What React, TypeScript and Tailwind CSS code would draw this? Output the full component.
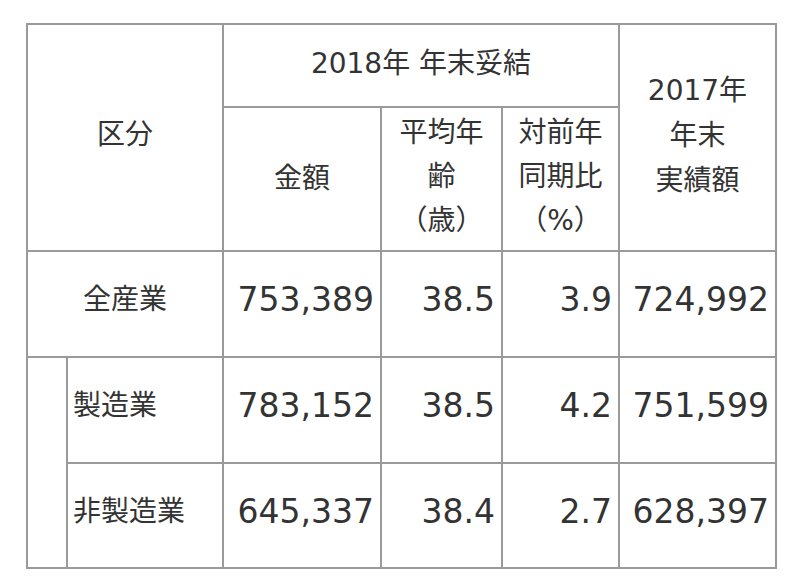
const font = { fontFamily: '"DejaVu Sans", "Noto Sans CJK JP", sans-serif' };

type Row = {
  label: string;
  amount: string;
  age: string;
  yoy: string;
  prev: string;
};

const ROWS: Row[] = [
  { label: '全産業', amount: '753,389', age: '38.5', yoy: '3.9', prev: '724,992' },
  { label: '製造業', amount: '783,152', age: '38.5', yoy: '4.2', prev: '751,599' },
  { label: '非製造業', amount: '645,337', age: '38.4', yoy: '2.7', prev: '628,397' },
];

const cell = 'border-r-2 border-b-2 border-[#9a9a9a] flex';
const num = `${cell} items-center justify-end pr-[6px] pb-[8px] text-[33px]`;

export default function App() {
  return (
    <div className="w-[800px] h-[586px] bg-white text-[#333] pt-[23px] pl-[26px]" style={font}>
      <div className="grid w-[751px] grid-cols-[40px_156px_158px_121px_117px_157px] grid-rows-[83px_144px_106px_106px_105px] border-l-2 border-t-2 border-[#9a9a9a]">
        {/* header */}
        <div className={`${cell} col-span-2 row-span-2 items-center justify-center pb-[6px] text-[28px]`}>
          区分
        </div>
        <div className={`${cell} col-span-3 items-center justify-center pb-[4px] text-[28px]`}>
          2018年 年末妥結
        </div>
        <div className={`${cell} row-span-2 flex-col items-center justify-center pb-[4px] text-[28px] leading-[45px]`}>
          <span>2017年</span>
          <span>年末</span>
          <span>実績額</span>
        </div>
        <div className={`${cell} items-center justify-center text-[28px]`}>金額</div>
        <div className={`${cell} flex-col items-center justify-center pb-[4px] text-[28px] leading-[44px]`}>
          <span>平均年</span>
          <span>齢</span>
          <span>（歳）</span>
        </div>
        <div className={`${cell} flex-col items-center justify-center pb-[4px] text-[28px] leading-[44px]`}>
          <span>対前年</span>
          <span>同期比</span>
          <span>（%）</span>
        </div>

        {/* 全産業 */}
        <div className={`${cell} col-span-2 items-center justify-center pb-[8px] text-[28px]`}>
          {ROWS[0].label}
        </div>
        <div className={num}>{ROWS[0].amount}</div>
        <div className={num}>{ROWS[0].age}</div>
        <div className={num}>{ROWS[0].yoy}</div>
        <div className={num}>{ROWS[0].prev}</div>

        {/* 内訳 */}
        <div className={`${cell} row-span-2`} />
        {ROWS.slice(1).map((r) => (
          <div key={r.label} className="contents">
            <div className={`${cell} items-center pl-[5px] pb-[8px] text-[28px]`}>{r.label}</div>
            <div className={num}>{r.amount}</div>
            <div className={num}>{r.age}</div>
            <div className={num}>{r.yoy}</div>
            <div className={num}>{r.prev}</div>
          </div>
        ))}
      </div>
    </div>
  );
}
